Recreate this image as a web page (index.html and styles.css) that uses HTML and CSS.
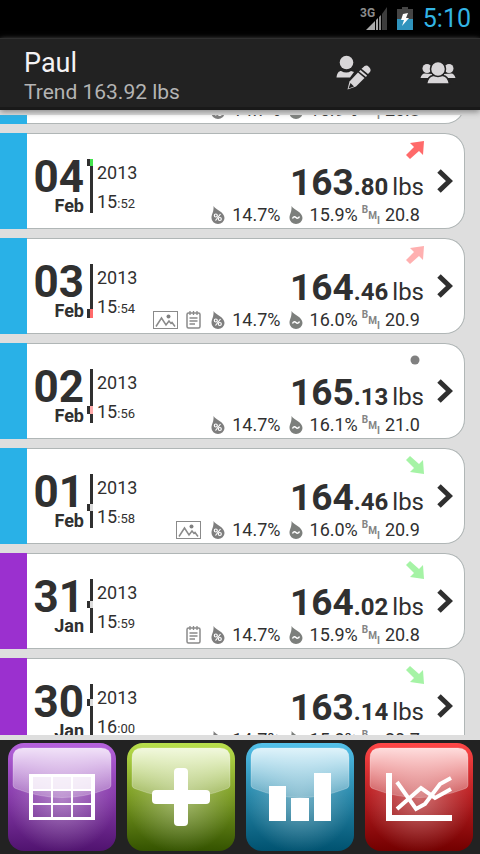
FILE: index.html
```html
<!DOCTYPE html>
<html lang="en">
<head>
<meta charset="utf-8">
<meta name="viewport" content="width=device-width, initial-scale=1">
<title>Weight log</title>
<link rel="stylesheet" href="styles.css">
</head>
<body>
<svg class="defs" aria-hidden="true">
  <defs>
    <symbol id="up" viewBox="0 0 18 18"><path d="M18 0 L17 14 L13 10 L4 18 L0 14 L8 6 L4 2 Z"/></symbol>
    <symbol id="down" viewBox="0 0 18 18"><path d="M18 18 L4 16 L8 12 L0 4 L4 0 L13 8 L17 4 Z"/></symbol>
    <symbol id="dot" viewBox="0 0 18 18"><circle cx="9" cy="9" r="4.5"/></symbol>
    <symbol id="chevron" viewBox="0 0 16 24"><path d="M2 2 L12.500 12 L2 22" fill="none" stroke="#303030" stroke-width="5"/></symbol>
    <symbol id="fat" viewBox="0 0 14 18"><path d="M2.500 0 C5 4 13.500 6 13.500 12 A6.500 6 0 0 1 .5 12 C.5 8 3 6 2.500 0Z" fill="#7e7e7e"/><g fill="none" stroke="#fff" stroke-width="1.200"><circle cx="4.800" cy="9.500" r="1.500"/><circle cx="8.800" cy="13" r="1.500"/><path d="M9.500 8 L4.500 14.500"/></g></symbol>
    <symbol id="water" viewBox="0 0 14 18"><path d="M2.500 0 C5 4 13.500 6 13.500 12 A6.500 6 0 0 1 .5 12 C.5 8 3 6 2.500 0Z" fill="#7c7f7c"/><path d="M3.500 12.500 C4.500 10 6 10.500 7 11.500 S9.500 12.500 10.500 10.500" fill="none" stroke="#fff" stroke-width="1.500"/></symbol>
    <symbol id="photo" viewBox="0 0 25 18"><rect x=".5" y=".5" width="24" height="17" fill="#fff" stroke="#8a8a8a"/><path d="M3 15.500 L8.500 7 L13 14 L16 10 L18 12.500 L19 11.500 L22 15.500" fill="none" stroke="#8a8a8a" stroke-width="1.500"/><circle cx="15.500" cy="5.500" r="2" fill="#808080"/></symbol>
    <symbol id="note" viewBox="0 0 15 18"><rect x="1" y="2" width="13" height="15" rx="1.500" fill="#fff" stroke="#8a8a8a" stroke-width="1.500"/><path d="M4 0V4M7.500 0V4M11 0V4M3.500 7H11.500M3.500 10H11.500M3.500 13H9" stroke="#8a8a8a" stroke-width="1.300"/></symbol>
    <linearGradient id="gloss" x1="0" y1="0" x2="0" y2="1"><stop offset="0" stop-color="#fff" stop-opacity=".82"/><stop offset="1" stop-color="#fff" stop-opacity=".2"/></linearGradient>
    <radialGradient id="glow" cx=".5" cy=".52" r=".5"><stop offset="0" stop-color="#fff" stop-opacity=".36"/><stop offset="1" stop-color="#fff" stop-opacity="0"/></radialGradient>
    <linearGradient id="purple" x1="0" y1="0" x2="0" y2="1"><stop offset="0" stop-color="#b562dc"/><stop offset=".5" stop-color="#863aa9"/><stop offset="1" stop-color="#50136f"/></linearGradient>
    <linearGradient id="green" x1="0" y1="0" x2="0" y2="1"><stop offset="0" stop-color="#b9df4c"/><stop offset=".5" stop-color="#7a9a22"/><stop offset="1" stop-color="#345300"/></linearGradient>
    <linearGradient id="blue" x1="0" y1="0" x2="0" y2="1"><stop offset="0" stop-color="#54c1ea"/><stop offset=".5" stop-color="#2585a7"/><stop offset="1" stop-color="#005270"/></linearGradient>
    <linearGradient id="red" x1="0" y1="0" x2="0" y2="1"><stop offset="0" stop-color="#ff4747"/><stop offset=".5" stop-color="#b61d20"/><stop offset="1" stop-color="#730000"/></linearGradient>
    <symbol id="shine" viewBox="0 0 108 108"><rect width="108" height="108" rx="16" fill="url(#glow)"/><path d="M5 15 Q5 5 15 5 H93 Q103 5 103 15 V42 Q103 45 99 46 Q54 63 9 46 Q5 45 5 42Z" fill="url(#gloss)" stroke="#fff" stroke-opacity=".22"/></symbol>
  </defs>
</svg>

<div class="status">
  <svg width="28" height="26" viewBox="0 0 28 26" role="img" aria-label="Signal"><text x="0" y="11" class="net">3G</text><path d="M6 24 L15 15 V24Z" fill="#aaa"/><path d="M16 14 L18 12 V24H16Z" fill="#aaa"/><path d="M19 11 L21 9 V24H19Z" fill="#888"/><path d="M22 8 L27 1 V24H22Z" fill="#3c3c3c"/></svg>
  <svg class="battery" width="16" height="24" viewBox="0 0 16 24" role="img" aria-label="Battery charging"><path d="M5 0H11V2H16V12H0V2H5Z" fill="#454545"/><path d="M0 12H16V23H0Z" fill="#2f93bd"/><path d="M6 7L11 6L9 11H12L5 19L7 13H4Z" fill="#fff"/></svg>
  <time class="clock">5:10</time>
</div>

<header class="bar">
  <div class="who">
    <h1 class="name">Paul</h1>
    <p class="trend">Trend 163.92 lbs</p>
  </div>
  <button class="action" aria-label="Edit user"><svg width="36" height="36" viewBox="0 0 36 36" fill="#d8d6d8"><circle cx="10.500" cy="7.500" r="6.800"/><path d="M.5 22.500 C1 18 3 16 5 16 Q10.500 19 15 16 L18 17 L14 22.500Z"/><path d="M27 12.500 Q30 9 33 12 Q36 15 33.500 17.500 L32 19 L25.500 13.800Z"/><path d="M24.500 15 L31 20.500 L30 22 L23 16.500Z"/><path d="M22 17.500 L28.500 23 L20 31.500 L11.500 34.500 L13.500 26.500Z"/><path d="M14.500 28 L18 31.500 L12.500 33.500Z" fill="#222"/></svg></button>
  <button class="action" aria-label="All users"><svg width="36" height="24" viewBox="0 0 36 24" fill="#d8d6d8"><circle cx="7" cy="7.500" r="4.500"/><circle cx="29" cy="7.500" r="4.500"/><path d="M.5 17 Q2 12 5 12.500 L12 13 V17Z"/><path d="M35.500 17 Q34 12 31 12.500 L24 13 V17Z"/><path d="M6.500 23 Q8 15 13 14.500 H23 Q28 15 29.500 23Z" stroke="#222" stroke-width="1.500"/><circle cx="18" cy="8" r="7.500" stroke="#222" stroke-width="1.500"/></svg></button>
</header>

<main class="view">
  <ul class="list">
    <li><a href="#" class="card">
      <span class="date"><b class="day">05</b><b class="month">Feb</b></span>
      <svg class="scale" width="6" height="54"><path d="M3 0H6V54H3Z"/></svg>
      <span class="when"><span>2013</span><span>15<small>:50</small></span></span>
      <span class="data"><svg class="arrow rise"><use href="#up"/></svg><span class="weight"><b>163<small>.80</small></b><span class="unit">lbs</span></span>
        <span class="stats"><svg class="drop"><use href="#fat"/></svg><span>14.7%</span><svg class="drop"><use href="#water"/></svg><span>15.9%</span><span class="bmi"><i>B</i><i>M</i><i>I</i></span><span>20.8</span></span></span>
      <svg class="go"><use href="#chevron"/></svg>
    </a></li>
    <li><a href="#" class="card">
      <span class="date"><b class="day">04</b><b class="month">Feb</b></span>
      <svg class="scale" width="6" height="54"><path d="M3 0H6V54H3ZM0 0H3V7H0Z"/><rect x="3" y="0" width="3" height="7" fill="#43e34d"/></svg>
      <span class="when"><span>2013</span><span>15<small>:52</small></span></span>
      <span class="data"><svg class="arrow rise"><use href="#up"/></svg><span class="weight"><b>163<small>.80</small></b><span class="unit">lbs</span></span>
        <span class="stats"><svg class="drop"><use href="#fat"/></svg><span>14.7%</span><svg class="drop"><use href="#water"/></svg><span>15.9%</span><span class="bmi"><i>B</i><i>M</i><i>I</i></span><span>20.8</span></span></span>
      <svg class="go"><use href="#chevron"/></svg>
    </a></li>
    <li><a href="#" class="card">
      <span class="date"><b class="day">03</b><b class="month">Feb</b></span>
      <svg class="scale" width="6" height="54"><path d="M3 0H6V54H3ZM0 45H3V54H0Z"/><rect x="3" y="45" width="3" height="9" fill="#ff6a6a"/></svg>
      <span class="when"><span>2013</span><span>15<small>:54</small></span></span>
      <span class="data"><svg class="arrow rise-soft"><use href="#up"/></svg><span class="weight"><b>164<small>.46</small></b><span class="unit">lbs</span></span>
        <span class="stats"><svg class="photo"><use href="#photo"/></svg><svg class="note"><use href="#note"/></svg><svg class="drop"><use href="#fat"/></svg><span>14.7%</span><svg class="drop"><use href="#water"/></svg><span>16.0%</span><span class="bmi"><i>B</i><i>M</i><i>I</i></span><span>20.9</span></span></span>
      <svg class="go"><use href="#chevron"/></svg>
    </a></li>
    <li><a href="#" class="card">
      <span class="date"><b class="day">02</b><b class="month">Feb</b></span>
      <svg class="scale" width="6" height="54"><path d="M3 0H6V54H3ZM0 37H3V45H0Z"/><rect x="3" y="37" width="3" height="8" fill="#ffaaaa"/></svg>
      <span class="when"><span>2013</span><span>15<small>:56</small></span></span>
      <span class="data"><svg class="arrow flat"><use href="#dot"/></svg><span class="weight"><b>165<small>.13</small></b><span class="unit">lbs</span></span>
        <span class="stats"><svg class="drop"><use href="#fat"/></svg><span>14.7%</span><svg class="drop"><use href="#water"/></svg><span>16.1%</span><span class="bmi"><i>B</i><i>M</i><i>I</i></span><span>21.0</span></span></span>
      <svg class="go"><use href="#chevron"/></svg>
    </a></li>
    <li><a href="#" class="card">
      <span class="date"><b class="day">01</b><b class="month">Feb</b></span>
      <svg class="scale" width="6" height="54"><path d="M3 0H6V54H3ZM0 30H3V37H0Z"/><rect x="3" y="30" width="3" height="7" fill="#dcdcdc"/></svg>
      <span class="when"><span>2013</span><span>15<small>:58</small></span></span>
      <span class="data"><svg class="arrow fall"><use href="#down"/></svg><span class="weight"><b>164<small>.46</small></b><span class="unit">lbs</span></span>
        <span class="stats"><svg class="photo last"><use href="#photo"/></svg><svg class="drop"><use href="#fat"/></svg><span>14.7%</span><svg class="drop"><use href="#water"/></svg><span>16.0%</span><span class="bmi"><i>B</i><i>M</i><i>I</i></span><span>20.9</span></span></span>
      <svg class="go"><use href="#chevron"/></svg>
    </a></li>
    <li><a href="#" class="card january">
      <span class="date"><b class="day">31</b><b class="month">Jan</b></span>
      <svg class="scale" width="6" height="54"><path d="M3 0H6V54H3ZM0 22H3V29H0Z"/><rect x="3" y="22" width="3" height="7" fill="#dcdcdc"/></svg>
      <span class="when"><span>2013</span><span>15<small>:59</small></span></span>
      <span class="data"><svg class="arrow fall"><use href="#down"/></svg><span class="weight"><b>164<small>.02</small></b><span class="unit">lbs</span></span>
        <span class="stats"><svg class="note"><use href="#note"/></svg><svg class="drop"><use href="#fat"/></svg><span>14.7%</span><svg class="drop"><use href="#water"/></svg><span>15.9%</span><span class="bmi"><i>B</i><i>M</i><i>I</i></span><span>20.8</span></span></span>
      <svg class="go"><use href="#chevron"/></svg>
    </a></li>
    <li><a href="#" class="card january">
      <span class="date"><b class="day">30</b><b class="month">Jan</b></span>
      <svg class="scale" width="6" height="54"><path d="M3 0H6V54H3ZM0 15H3V22H0Z"/><rect x="3" y="15" width="3" height="7" fill="#dcdcdc"/></svg>
      <span class="when"><span>2013</span><span>16<small>:00</small></span></span>
      <span class="data"><svg class="arrow fall"><use href="#down"/></svg><span class="weight"><b>163<small>.14</small></b><span class="unit">lbs</span></span>
        <span class="stats"><svg class="drop"><use href="#fat"/></svg><span>14.7%</span><svg class="drop"><use href="#water"/></svg><span>15.8%</span><span class="bmi"><i>B</i><i>M</i><i>I</i></span><span>20.7</span></span></span>
      <svg class="go"><use href="#chevron"/></svg>
    </a></li>
  </ul>
</main>

<nav class="dock">
  <button class="tile" aria-label="Table"><svg viewBox="0 0 108 108"><rect width="108" height="108" rx="16" fill="url(#purple)"/><use href="#shine"/><path fill="#fff" fill-rule="evenodd" d="M21 31H87V77H21ZM25 34V46H43V34ZM45 34V46H63V34ZM65 34V46H83V34ZM25 48V60H43V48ZM45 48V60H63V48ZM65 48V60H83V48ZM25 62V74H43V62ZM45 62V74H63V62ZM65 62V74H83V62Z"/><path fill="#fff" fill-opacity=".8" d="M25 34H43V46H25ZM45 34H63V46H45ZM65 34H83V46H65Z"/></svg></button>
  <button class="tile" aria-label="Add entry"><svg viewBox="0 0 108 108"><rect width="108" height="108" rx="16" fill="url(#green)"/><use href="#shine"/><g fill="#fff"><rect x="47" y="25" width="14" height="58" rx="4"/><rect x="25" y="47" width="58" height="14" rx="4"/></g></svg></button>
  <button class="tile" aria-label="Bar chart"><svg viewBox="0 0 108 108"><rect width="108" height="108" rx="16" fill="url(#blue)"/><use href="#shine"/><path fill="#fff" d="M23 43H40V78H23ZM45 55H63V78H45ZM68 30H85V78H68Z"/></svg></button>
  <button class="tile" aria-label="Line chart"><svg viewBox="0 0 108 108"><rect width="108" height="108" rx="16" fill="url(#red)"/><use href="#shine"/><path fill="#fff" d="M21 30H27V72H87V78H21Z"/><g fill="none" stroke="#fff" stroke-width="4"><path d="M32 39 L51 66 L60 61 L75 41 L86 35"/><path d="M32 66 L56 45 L70 55 L86 46"/></g></svg></button>
</nav>
</body>
</html>
```
FILE: styles.css
```css
* { box-sizing: border-box; }

body {
  margin: 0;
  height: 100vh;
  display: flex;
  flex-direction: column;
  background: #dedede;
  color: #303030;
  font-family: Roboto, "Liberation Sans", sans-serif;
  font-size: 18px;
}

svg { display: block; flex: none; }
.defs { position: absolute; width: 0; height: 0; }
button { border: 0; padding: 0; background: none; cursor: pointer; }

.status {
  display: flex;
  align-items: center;
  justify-content: flex-end;
  height: 38px;
  flex: none;
  padding-right: 9px;
  background: #000;
}
.net { font-size: 12px; font-weight: 700; fill: #8c8c8c; }
.battery { margin: 0 10px 0 9px; }
.clock { color: #33b5e5; font-size: 25px; line-height: 40px; }

.bar {
  display: flex;
  align-items: center;
  flex: none;
  height: 72px;
  padding: 0 24px;
  gap: 48px;
  background: #222;
  border-top: 1px solid #303030;
  border-bottom: 3px solid #191919;
  box-shadow: 0 2px 6px #888;
  z-index: 1;
}
.who { flex: 1; padding-top: 6px; }
.name { margin: 0; color: #f4f2f4; font-size: 27px; font-weight: 400; line-height: 32px; }
.trend { margin: 0; color: #b4b4b4; font-size: 21px; line-height: 26px; }

.view { flex: 1; min-height: 0; overflow: hidden; margin: 5px 0; }

/* The list is scrolled: its first entry is mostly above the view. */
.list {
  display: flex;
  flex-direction: column;
  gap: 9px;
  margin: -87px 15px 0 0;
  padding: 0;
  list-style: none;
}

.card {
  display: flex;
  height: 96px;
  color: inherit;
  text-decoration: none;
  background: #fff;
  border-radius: 0 20px 20px 0;
  box-shadow: inset -1px 0 #b0b6b6, inset 0 1px #b0b6b6, inset 0 -1px #b0b6b6;
}
.card::before { content: ""; width: 27px; background: #29b1e7; }
.january::before { background: #9b30cf; }

.date {
  display: flex;
  flex-direction: column;
  align-items: flex-end;
  width: 57px;
  padding-top: 26px;
}
.day { font-size: 44px; line-height: 36px; }
.month { font-size: 18px; line-height: 22px; }
.scale { margin: 26px 4px 0 3px; fill: #303030; }
.when { display: flex; flex-direction: column; padding-top: 25px; line-height: 29px; }
.when small { font-size: 13px; }

.data { flex: 1; display: flex; flex-direction: column; align-items: flex-end; padding-top: 8px; }
.arrow { width: 18px; height: 18px; margin-bottom: 1px; }
.rise { fill: #ff6a6a; }
.rise-soft { fill: #ffb0b0; }
.fall { fill: #a5f3a5; }
.flat { fill: #808080; }
.weight { display: flex; align-items: baseline; gap: 4px; height: 43px; line-height: 46px; }
.weight b { font-size: 37px; }
.weight small { font-size: 24px; }
.unit { font-size: 24px; }

.stats { display: flex; align-items: center; line-height: 24px; padding-right: 4px; }
.drop { width: 14px; height: 18px; margin: 0 7px 0 8px; }
.photo { width: 25px; height: 18px; margin-right: 8px; }
.note { width: 15px; height: 18px; margin-right: 2px; }
.last { margin-right: 2px; }
.bmi {
  display: flex;
  height: 20px;
  margin: 0 5px 0 4px;
  color: #848484;
  font-size: 10px;
  font-weight: 700;
  line-height: 9px;
}
.bmi i { font-style: normal; }
.bmi i:nth-child(2) { align-self: center; }
.bmi i:nth-child(3) { align-self: flex-end; }
.go { width: 16px; height: 24px; margin: 36px 12px 0 13px; }

.dock {
  display: flex;
  flex: none;
  gap: 11px;
  padding: 3px 7px 3px 8px;
  background: #222;
}
.tile { flex: 1; }
.tile svg { width: 100%; }
```
